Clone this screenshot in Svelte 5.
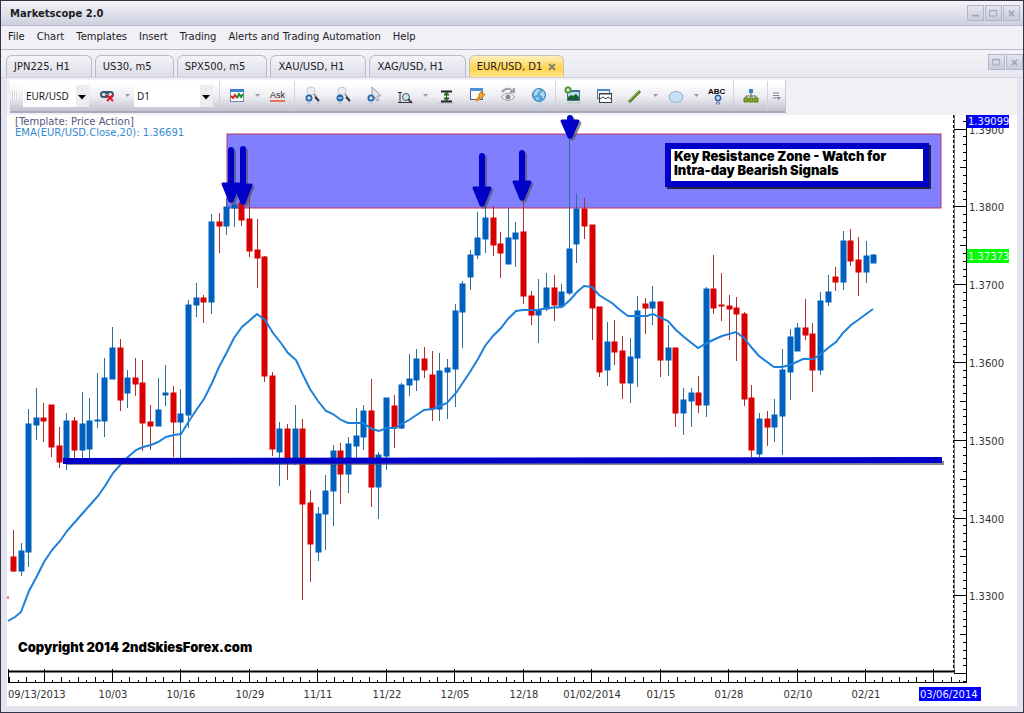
<script>
  const menu = ['File', 'Chart', 'Templates', 'Insert', 'Trading', 'Alerts and Trading Automation', 'Help']
  const tabs = ['JPN225, H1', 'US30, m5', 'SPX500, m5', 'XAU/USD, H1', 'XAG/USD, H1', 'EUR/USD, D1']
  let active = 'EUR/USD, D1'

  const tools = [
    ['chart', 'caret', 'ask'],
    ['zoomin', 'zoomout', 'pointer', 'scale', 'caret', 'fit', 'props', 'eye', 'globe'],
    ['picture', 'windows', 'line', 'caret', 'ellipse', 'caret', 'label'],
    ['tree']
  ]

  // direction, high, low, body top, body bottom
  const candles = [
    ['d', 530, 572, 557, 571], ['u', 543, 576, 551, 571], ['u', 409, 567, 424, 552], ['u', 388, 440, 418, 425],
    ['d', 403, 442, 418, 421], ['d', 405, 457, 405, 447], ['d', 427, 468, 446, 462], ['u', 413, 470, 421, 460],
    ['d', 417, 458, 421, 450], ['u', 392, 460, 424, 450], ['u', 398, 458, 421, 449], ['u', 373, 428, 420, 421],
    ['u', 358, 437, 378, 421], ['u', 327, 379, 348, 379], ['d', 339, 411, 348, 400], ['u', 370, 408, 378, 393],
    ['d', 358, 396, 378, 384], ['d', 360, 451, 383, 423], ['d', 405, 450, 422, 426], ['u', 378, 426, 410, 426],
    ['u', 365, 406, 393, 395], ['d', 386, 457, 393, 422], ['u', 389, 458, 414, 422], ['u', 300, 428, 305, 415],
    ['u', 283, 317, 298, 305], ['d', 295, 323, 298, 302], ['u', 214, 314, 222, 302], ['d', 213, 253, 222, 226],
    ['u', 198, 235, 207, 226], ['u', 200, 227, 205, 208], ['d', 203, 226, 203, 220], ['d', 195, 257, 219, 251],
    ['d', 219, 288, 250, 258], ['d', 256, 382, 257, 376], ['d', 372, 456, 376, 449], ['u', 422, 486, 429, 452],
    ['d', 424, 480, 429, 460], ['u', 405, 465, 429, 459], ['d', 419, 600, 429, 504], ['d', 490, 582, 503, 544],
    ['u', 507, 561, 514, 552], ['u', 475, 550, 491, 514], ['u', 445, 526, 451, 491], ['d', 443, 504, 451, 474],
    ['u', 437, 493, 444, 474], ['u', 408, 458, 436, 446], ['u', 405, 450, 411, 437], ['d', 379, 507, 411, 487],
    ['u', 452, 519, 455, 487], ['u', 398, 470, 398, 456], ['d', 395, 448, 406, 428], ['u', 383, 429, 385, 428],
    ['u', 354, 396, 379, 385], ['u', 349, 391, 359, 380], ['d', 347, 378, 359, 370], ['d', 351, 421, 375, 409],
    ['u', 353, 421, 371, 409], ['u', 359, 419, 368, 372], ['u', 304, 407, 311, 369], ['u', 281, 348, 284, 312],
    ['u', 250, 290, 255, 277], ['u', 212, 259, 238, 255], ['u', 205, 253, 218, 239], ['d', 206, 256, 218, 245],
    ['d', 232, 278, 244, 253], ['u', 208, 264, 238, 264], ['u', 222, 267, 233, 239], ['d', 199, 304, 232, 296],
    ['d', 291, 325, 296, 315], ['u', 279, 343, 310, 315], ['u', 273, 311, 288, 309], ['d', 275, 321, 288, 305],
    ['u', 284, 306, 292, 306], ['u', 138, 295, 249, 293], ['u', 193, 263, 209, 244], ['d', 198, 239, 209, 226],
    ['d', 225, 340, 225, 308], ['d', 307, 377, 307, 372], ['u', 322, 386, 342, 370], ['d', 320, 365, 342, 352],
    ['d', 336, 399, 351, 383], ['u', 338, 403, 357, 383], ['u', 296, 387, 311, 358], ['d', 298, 334, 304, 308],
    ['u', 286, 325, 302, 308], ['d', 301, 377, 302, 360], ['u', 325, 376, 348, 360], ['d', 348, 427, 348, 413],
    ['u', 388, 435, 400, 413], ['u', 388, 427, 393, 401], ['d', 376, 413, 393, 405], ['u', 287, 417, 289, 405],
    ['d', 255, 314, 289, 308], ['d', 273, 321, 305, 306], ['d', 295, 340, 306, 309], ['d', 297, 361, 308, 314],
    ['d', 312, 406, 314, 399], ['d', 385, 457, 398, 450], ['u', 413, 457, 419, 454], ['d', 411, 446, 419, 427],
    ['u', 399, 442, 415, 427], ['u', 349, 455, 370, 416], ['u', 329, 400, 337, 372], ['u', 323, 351, 328, 351],
    ['d', 299, 340, 328, 335], ['d', 323, 392, 334, 370], ['u', 292, 375, 301, 370], ['u', 275, 306, 292, 302],
    ['d', 267, 291, 277, 282], ['u', 231, 290, 241, 282], ['d', 229, 266, 241, 261], ['d', 237, 296, 260, 272],
    ['u', 241, 283, 256, 272], ['u', 254, 263, 255, 263]
  ]
  const candleX = (i) => Math.round(13 + i * 7.613)

  const ema = '8,621 15,617 21,612 29,591 37,576 44,562 52,550 60,541 67,531 75,522 82,514 90,505 98,496 105,486 113,473 121,464 128,457 136,450 143,447 151,445 158,442 166,437 174,435 181,434 189,421 197,409 204,399 212,383 219,367 227,352 234,338 242,327 249,321 257,314 265,320 273,333 281,343 288,353 296,360 303,375 310,389 318,401 326,411 333,414 341,420 348,423 363,423 372,429 379,431 387,428 395,428 402,424 409,420 424,410 433,409 447,403 456,393 470,372 478,359 485,346 493,336 501,328 508,319 516,311 523,310 538,310 547,308 562,307 570,300 577,292 584,286 592,287 599,295 612,303 620,310 628,316 647,316 653,314 668,321 676,330 684,337 698,348 707,343 713,340 722,336 736,332 744,338 752,348 759,356 774,367 782,367 790,365 803,359 813,359 821,354 828,348 836,342 843,333 851,325 858,320 873,309'

  const prices = ['1.3900', '1.3800', '1.3700', '1.3600', '1.3500', '1.3400', '1.3300']
  const priceY = (i) => 129.5 + i * 77.8
  const dates = ['10/03', '10/16', '10/29', '11/11', '11/22', '12/05', '12/18', '01/02/2014', '01/15', '01/28', '02/10', '02/21']
  const dateX = (i) => 44.5 + i * 68.46

  // minor ticks, ten per price step and eight per date step
  const yTicks = Array.from({ length: 73 }, (_, i) => i - 1)
  const xTicks = Array.from({ length: 112 }, (_, i) => i - 4)

  const tickLeft = (n) => (n % 10 === 0 ? 954 : n % 5 === 0 ? 960 : 963)
  const tickTop = (n) => (n % 8 === 0 ? 669 : n % 2 === 0 ? 677 : 680)

  // x, shaft top, head top, tip
  const arrows = [
    [231, 150, 183, 201],
    [243, 149, 184, 203],
    [482, 156, 187, 205],
    [522, 153, 181, 199],
    [570, 118, 120, 137]
  ]
</script>

<main>
  <header class="title">
    <h1>Marketscope 2.0</h1>
    <div class="controls">
      <button aria-label="Minimize"><svg viewBox="0 0 16 16"><path d="M4 11h8" stroke-width="2" /></svg></button>
      <button aria-label="Maximize"><svg viewBox="0 0 16 16"><path d="M3.500 5h8v6.500h-8zM3 5.500h9" /></svg></button>
      <button aria-label="Close"><svg viewBox="0 0 16 16"><path d="M5 5.500l6 6M11 5.500l-6 6" stroke-width="2" /></svg></button>
    </div>
  </header>

  <nav>
    {#each menu as item}
      <button>{item}</button>
    {/each}
  </nav>

  <div class="tabbar">
    <div class="tabs" role="tablist">
      {#each tabs as tab}
        <button role="tab" aria-selected={tab === active} class:active={tab === active} on:click={() => (active = tab)}>
          {tab}
          {#if tab === active}
            <svg viewBox="0 0 8 8"><path d="M1 1l6 6M7 1l-6 6" /></svg>
          {/if}
        </button>
      {/each}
    </div>
    <div class="controls">
      <button aria-label="Restore chart"><svg viewBox="0 0 16 16"><path d="M3.500 5h8v6.500h-8zM3 5.500h9" /></svg></button>
      <button aria-label="Close chart"><svg viewBox="0 0 16 16"><path d="M5 5.500l6 6M11 5.500l-6 6" stroke-width="2" /></svg></button>
    </div>
  </div>

  <section>
    <div class="toolrow">
      <div class="toolbar">
        <i class="grip"></i>
        <label class="symbol">
          <select aria-label="Symbol"><option>EUR/USD</option></select>
          <svg viewBox="0 0 8 5"><path d="M0 0h8L4 4.500z" /></svg>
        </label>
        <button class="tool" aria-label="Unlink">
          <svg viewBox="0 0 20 22">
            <g fill="none" stroke="#3d566f" stroke-width="2"><rect x="4" y="7" width="7" height="5" rx="2.500" /><rect x="9" y="7" width="7" height="5" rx="2.500" /></g>
            <path d="M7 9.500h6" stroke="#9db4c9" />
            <path d="M10 10l6 6M16 10l-6 6" stroke="#e81820" stroke-width="2" />
          </svg>
        </button>
        <button class="caret" aria-label="Link colours"><svg viewBox="0 0 5 3"><path d="M0 0h5L2.500 3z" /></svg></button>
        <label class="period">
          <select aria-label="Period"><option>D1</option></select>
          <svg viewBox="0 0 8 5"><path d="M0 0h8L4 4.500z" /></svg>
        </label>

        {#each tools as group}
          <i class="sep"></i>
          {#each group as tool}
            {#if tool === 'caret'}
              <button class="caret" aria-label="More"><svg viewBox="0 0 5 3"><path d="M0 0h5L2.500 3z" /></svg></button>
            {:else if tool === 'ask'}
              <button class="tool"><span class="ask">Ask</span></button>
            {:else}
              <button class="tool" aria-label={tool}>
                <svg viewBox="0 0 20 22">
                  {#if tool === 'chart'}
                    <rect x="3.500" y="4.500" width="13" height="12" fill="#fff" stroke="#7189a5" />
                    <path d="M3 5.500h14" stroke="#3d7fd0" stroke-width="3" />
                    <path d="M4 11l2 2 2-3 2 3" fill="none" stroke="#d22" stroke-width="2" />
                    <path d="M10 13l2-4 2 3 2-3" fill="none" stroke="#169028" stroke-width="2" />
                    <path d="M4 19h12" stroke="#d5d9e3" stroke-width="2" />
                  {:else if tool === 'zoomin' || tool === 'zoomout'}
                    <circle cx="9" cy="6" r="4" fill="#eceef2" stroke="#c5c8d0" />
                    <path d="M12 9l3 4" stroke="#999ca8" stroke-width="2" />
                    <path d="M13 12l4 4" stroke="#30303a" stroke-width="2" />
                    <circle cx="7" cy="13" r="3.500" fill="#2668ae" />
                    <path d={tool === 'zoomin' ? 'M5 13h4M7 11v4' : 'M5 13h4'} stroke="#fff" />
                    <path d="M5 18h4M15 18h2" stroke="#c7cfdd" stroke-width="2" />
                  {:else if tool === 'pointer'}
                    <path d="M8 2v12l3-2 2 4 2-1-2-4h4z" fill="#e4e5eb" stroke="#9a9ca8" />
                    <circle cx="7" cy="13" r="3.500" fill="#2668ae" />
                    <path d="M5 13h4M7 11v4" stroke="#fff" />
                    <path d="M5 18h4" stroke="#c7cfdd" stroke-width="2" />
                  {:else if tool === 'scale'}
                    <path d="M3 7.500h4M5 7v10M3 17.500h13" fill="none" stroke="#333" />
                    <circle cx="11" cy="12" r="3.500" fill="#c9e6f3" stroke="#48545e" />
                    <path d="M13 14l4 4" stroke="#444" stroke-width="2" />
                  {:else if tool === 'fit'}
                    <path d="M5 6.500h11M5 16.500h11" stroke="#222" stroke-width="2" />
                    <path d="M10.500 8v7M8 10l2.500-3 2.500 3zM8 13l2.500 3 2.500-3z" fill="#45912c" stroke="#24581c" />
                    <path d="M2 18.500h16" stroke="#c4c5cd" />
                  {:else if tool === 'props'}
                    <rect x="3.500" y="3.500" width="12" height="11" fill="#f8faff" stroke="#49627f" />
                    <path d="M3 4.500h13" stroke="#4c92d4" stroke-width="3" />
                    <path d="M9 16l5-5" stroke="#e89418" stroke-width="3" />
                    <path d="M12 9l3-3v3h3l-3 4h-3z" fill="#f8ae28" stroke="#cf7e16" />
                  {:else if tool === 'eye'}
                    <path d="M3 12q7-8 14 0q-7 7-14 0z" fill="#eeeff2" stroke="#a2a5ac" />
                    <circle cx="10" cy="12" r="2.500" fill="#85888f" />
                    <path d="M4 7q5-6 11-1M16 3v4h-4" fill="none" stroke="#9da0a8" stroke-width="2" />
                  {:else if tool === 'globe'}
                    <circle cx="10" cy="10" r="6.500" fill="#58a4d4" stroke="#3984b9" />
                    <path d="M5 8q2-4 5-4l1 2-2 1-1 3-3 1zM11 8l3-2 2 4-2 4-1-3-2-1zM6 12l4 1-1 3z" fill="#a9dcf4" />
                    <path d="M6 19h8" stroke="#c3d9e8" stroke-width="2" />
                  {:else if tool === 'picture'}
                    <rect x="4" y="5" width="13" height="11" fill="#3f7290" />
                    <rect x="5" y="7" width="11" height="5" fill="#b9dfee" />
                    <path d="M5 15v-3l3-2 2 1 3-2 3 3v3z" fill="#18632a" />
                    <circle cx="5" cy="5" r="3.500" fill="#4b9630" />
                    <path d="M3 5h4M5 3v4" stroke="#fff" />
                    <path d="M4 18h13" stroke="#c2d7cb" stroke-width="2" />
                  {:else if tool === 'windows'}
                    <rect x="3.500" y="4.500" width="12" height="9" fill="#edf3fa" stroke="#527196" />
                    <path d="M3 5h13" stroke="#4d88c7" stroke-width="2" />
                    <rect x="5.500" y="8.500" width="12" height="9" fill="#fff" stroke="#3c4148" />
                    <path d="M5 9h13M6 14l3-2 3 2 2-2 3 2" fill="none" stroke="#3c4148" />
                  {:else if tool === 'line'}
                    <path d="M4 17L15 6" stroke="#587d25" stroke-width="3" />
                    <path d="M4 16L14 6" stroke="#9dcb48" />
                  {:else if tool === 'ellipse'}
                    <ellipse cx="10" cy="12" rx="7" ry="5.500" fill="#c6dff4" stroke="#8fb3d2" />
                  {:else if tool === 'label'}
                    <text x="1" y="9">ABC</text>
                    <circle cx="11" cy="13" r="3" fill="#4c82c0" stroke="#255a96" />
                    <path d="M9 13h4M11 11v4" stroke="#fff" />
                    <path d="M9.500 17h3v2h-3z" fill="none" stroke="#7189a8" />
                  {:else if tool === 'tree'}
                    <path d="M10 8v4M5 14v-3h10v3" fill="none" stroke="#596a49" />
                    <rect x="8" y="4" width="4" height="4" fill="#3b80c8" />
                    <path d="M3 13h4v4H3zM8 13h4v4H8zM13 13h4v4h-4z" fill="#84ac22" stroke="#5b7d17" />
                  {/if}
                </svg>
              </button>
            {/if}
          {/each}
        {/each}
        <i class="sep"></i>
        <button class="more" aria-label="Toolbar options">
          <svg viewBox="0 0 8 8"><path d="M0 1h6M0 3.500h6M0 6h3" stroke="#85879b" /><path d="M3 5h5L5.500 8z" fill="#85879b" /></svg>
        </button>
      </div>
    </div>

    <svg class="chart" viewBox="7 115 1010 590" role="img" aria-label="EUR/USD daily chart">
      <rect class="zone" x="227" y="134" width="714" height="74" />

      <text class="template" x="15" y="125">[Template: Price Action]</text>
      <text class="legend" x="15" y="136">EMA(EUR/USD.Close,20): 1.36691</text>

      <path class="down" d="M8 596v3" />
      {#each candles as [dir, high, low, top, bottom], i}
        <g class={dir === 'u' ? 'up' : 'down'}>
          <path d="M{candleX(i) + 0.5} {high}V{low}" />
          <rect x={candleX(i) - 2} y={top} width="5" height={bottom - top} />
        </g>
      {/each}
      <polyline class="ema" points={ema} />

      <path class="shadow" d="M66 463H944" />
      <path class="support" d="M63 461L942 460" />

      {#each arrows as [x, top, head, tip]}
        {#each ['shadow', 'arrow'] as layer}
          <g class={layer} transform={layer === 'shadow' ? 'translate(2 2)' : null}>
            <path class="shaft" d="M{x} {top}V{head}" />
            <path class="head" d="M{x - 8} {head + 1}h16L{x + 1} {tip}h-2z" />
          </g>
        {/each}
      {/each}

      <rect class="noteshadow" x="667" y="145" width="264" height="44" />
      <rect class="note" x="668" y="146" width="258" height="38" />
      <text class="heavy" x="674" y="161">Key Resistance Zone - Watch for</text>
      <text class="heavy" x="674" y="175">Intra-day Bearish Signals</text>
      <text class="heavy" x="18" y="652">Copyright 2014 2ndSkiesForex.com</text>

      <g class="axis">
        <path d="M966.500 115V683M8 682.500H967M8.500 669V683" />
        <path d="M954.500 115V673" stroke="#777" />
        <path d="M953.500 115V671" stroke-dasharray="3 2" />
        <path d="M8 671.500H955" stroke-width="2" />
        {#each yTicks as n}
          <path d="M{tickLeft(n)} {Math.round(priceY(n / 10)) - 0.5}H966" />
        {/each}
        {#each xTicks as n}
          <path d="M{Math.round(dateX(n / 8)) - 0.5} {tickTop(n)}V682" />
        {/each}
      </g>

      <g class="labels">
        {#each prices as price, i}
          <text x="969" y={Math.round(priceY(i)) + 4}>{price}</text>
        {/each}
        <text x="8" y="698">09/13/2013</text>
        {#each dates as date, i}
          <text class="date" x={Math.round(dateX(i + 1))} y="698">{date}</text>
        {/each}
      </g>

      <rect x="967" y="115" width="42" height="13" fill="#00f" />
      <rect x="967" y="249" width="42" height="14" fill="#0f0" />
      <rect x="919" y="687" width="62" height="14" fill="#00f" />
      <g class="tag">
        <text x="968" y="125">1.39099</text>
        <text x="968" y="260">1.37373</text>
        <text x="920" y="698">03/06/2014</text>
      </g>
    </svg>
  </section>
</main>

<style>
  :global(body) {
    background:#e4e4ee;
  }
  main {
    box-sizing:border-box;
    min-height:100vh;
    border:1px solid #34344a;
    font:10px "DejaVu Sans", Verdana, sans-serif;
    color:#1c1c24;
    background:#e4e4ee;
  }
  button, select {
    font:inherit;
    color:inherit;
    border:0;
    padding:0;
    background:none;
  }
  svg {
    display:block;
  }

  .title {
    display:flex;
    align-items:center;
    justify-content:space-between;
    height:24px;
    padding:0 3px 0 9px;
    background:linear-gradient(#f3f3f7, #cfd0df);
    border-bottom:1px solid #b9bacb;
  }
  h1 {
    margin:0;
    font-size:10px;
  }
  .controls {
    display:flex;
    gap:1px;
  }
  .controls button {
    width:17px;
    height:16px;
    box-sizing:border-box;
    border:1px solid #b4b5ca;
    background:linear-gradient(#e6e6ef, #c9cadb);
  }
  .controls svg {
    width:15px;
    height:14px;
    fill:none;
    stroke:#a2a4b8;
  }

  nav {
    display:flex;
    gap:12px;
    height:21px;
    padding:0 7px 2px;
    background:#f0f0f6;
    border-bottom:1px solid #b9bacb;
  }

  .tabbar {
    display:flex;
    justify-content:space-between;
    height:27px;
    padding-left:5px;
    background:linear-gradient(#f3f3f7, #e7e7f0);
    border-bottom:1px solid #d2d2df;
  }
  .tabbar .controls {
    padding-top:4px;
  }
  .tabs {
    display:flex;
    gap:3px;
    align-items:flex-end;
  }
  .tabs button {
    display:flex;
    align-items:center;
    gap:6px;
    height:22px;
    padding:0 21px 0 7px;
    border:1px solid #b9bacc;
    border-bottom:0;
    border-radius:6px 6px 0 0;
    background:linear-gradient(#f4f4f8, #dcdce8);
  }
  .tabs .active {
    padding-right:7px;
    border-color:#c9c3b0;
    background:linear-gradient(#fff0c0, #ffd34d 60%, #ffe58a);
  }
  .tabs svg {
    width:8px;
    height:8px;
    stroke:#85806c;
    stroke-width:2;
  }

  section {
    margin:0 6px;
    background:#fff;
    border-bottom:1px solid #fff;
  }
  .toolrow {
    height:37px;
    padding-left:3px;
    background:#f0f0f5;
  }
  .toolbar {
    display:inline-flex;
    align-items:center;
    height:31px;
    margin-top:2px;
    background:linear-gradient(#fff 10%, #ececf2 55%, #c3c3d1);
    border-bottom:2px solid #a9a9bb;
    border-right:1px solid #c8c8d5;
  }
  .grip {
    width:6px;
    height:9px;
    margin:0 5px 0 2px;
    background:repeating-linear-gradient(90deg, #d5d5de 0 1px, #fff 1px 2px);
  }
  label {
    position:relative;
    display:block;
    height:22px;
  }
  .symbol {
    width:66px;
    margin-right:2px;
  }
  .period {
    width:79px;
    margin:0 5px 0 2px;
  }
  label svg {
    position:absolute;
    right:3px;
    top:10px;
    width:8px;
    height:5px;
    pointer-events:none;
  }
  select {
    appearance:none;
    width:100%;
    height:100%;
    padding:0 3px;
    border-radius:0;
    font:10px "Noto Sans", Tahoma, sans-serif;
    background:linear-gradient(90deg, #fff calc(100% - 13px), #ececf1 0);
  }
  .tool {
    width:31px;
    height:28px;
    display:grid;
    place-items:center;
  }
  .tool svg {
    width:20px;
    height:22px;
  }
  .tool text {
    font:bold 8px "Liberation Sans", Arial, sans-serif;
  }
  .ask {
    font:9px "Liberation Sans", Arial, sans-serif;
    border-bottom:2px solid #ee7350;
  }
  .caret {
    width:10px;
    height:20px;
    display:grid;
    place-items:center;
  }
  .caret svg {
    width:5px;
    height:3px;
    fill:#9a9bad;
  }
  .sep {
    width:1px;
    height:30px;
    margin:0 1px;
    background:#d3d3df;
  }
  .more {
    width:16px;
  }
  .more svg {
    width:8px;
    height:8px;
    margin:auto;
  }

  .chart {
    width:100%;
    height:auto;
    font:10px "DejaVu Sans", Verdana, sans-serif;
  }
  .zone {
    fill:#8080ff;
    stroke:#c43565;
  }
  .template {
    fill:#55557a;
  }
  .legend {
    fill:#3489cf;
  }
  .up {
    fill:#0060be;
    stroke:#0060be;
  }
  .down {
    fill:#d80000;
    stroke:#d80000;
  }
  .up path {
    stroke:#2c7099;
  }
  .down path {
    stroke:#b03030;
  }
  .ema {
    fill:none;
    stroke:#1c80db;
    stroke-width:2;
  }
  .support {
    stroke:#0000c8;
    stroke-width:6;
  }
  .shadow {
    fill:#55556b;
    stroke:#55556b;
    stroke-width:4;
    opacity:.7;
  }
  .arrow {
    fill:#0000c8;
    stroke:#0000c8;
  }
  .shaft {
    stroke-width:6;
    stroke-linecap:round;
  }
  .head {
    stroke-width:3;
    stroke-linejoin:round;
  }
  .note {
    fill:#fff;
    stroke:#0000c8;
    stroke-width:6;
  }
  .noteshadow {
    fill:#22224a;
  }
  .heavy {
    font:900 13px Inter, "Arial Black", sans-serif;
    fill:#000;
  }
  .axis {
    fill:none;
    stroke:#000;
  }
  .labels {
    fill:#333;
  }
  .date {
    text-anchor:middle;
  }
  .tag {
    fill:#f0f0ff;
  }
</style>
